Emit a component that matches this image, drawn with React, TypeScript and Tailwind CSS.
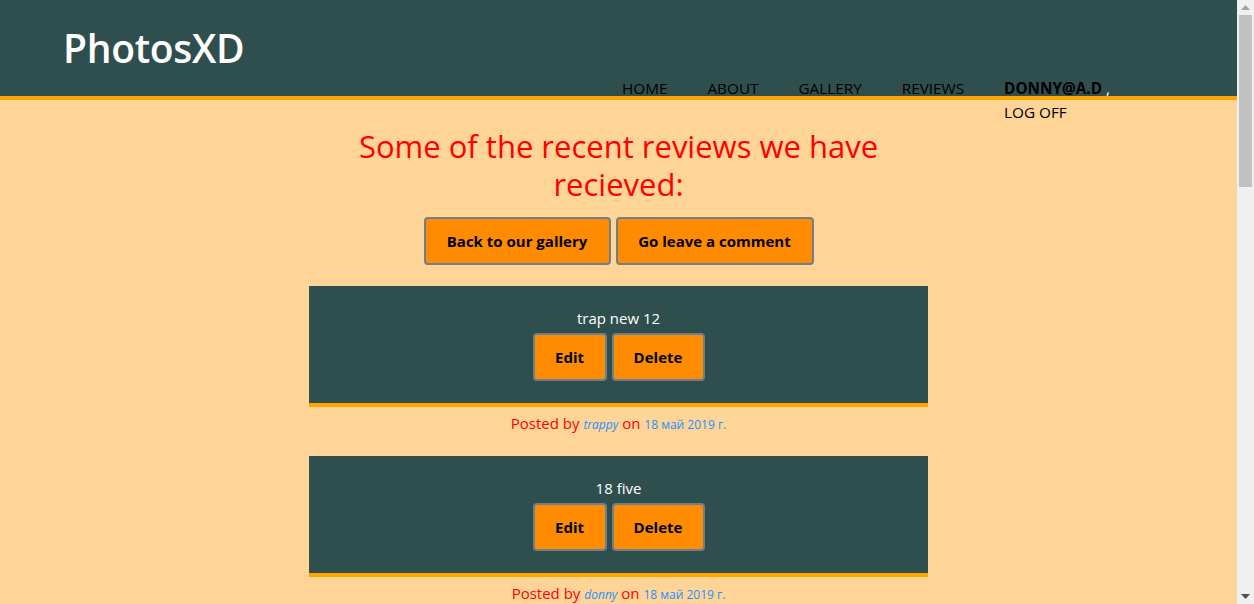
import React from 'react';

const reviews = [
  { id: 1, text: 'trap new 12', author: 'trappy', date: '18 май 2019 г.' },
  { id: 2, text: '18 five', author: 'donny', date: '18 май 2019 г.' },
  { id: 3, text: 'first!', author: 'trappy', date: '17 май 2019 г.' },
];

const navLinks = ['HOME', 'ABOUT', 'GALLERY', 'REVIEWS'];

function OrangeButton({ children, className = '' }: { children: React.ReactNode; className?: string }) {
  return (
    <button
      className={`bg-[#ff8c00] border-2 border-[#6f7f8f] rounded-[4px] font-bold text-black text-[15px] leading-[20px] py-3 ${className}`}
    >
      {children}
    </button>
  );
}

// fake window scrollbar, the screenshot was taken with one showing
function Scrollbar() {
  return (
    <div className="w-[17px] shrink-0 bg-[#f0f0f0] flex flex-col items-center">
      <svg width="9" height="5" viewBox="0 0 9 5" className="mt-[5px] shrink-0">
        <path d="M4.5 0 L9 5 L0 5 Z" fill="#a3a3a3" />
      </svg>
      <div className="w-[13px] h-[172px] bg-[#c1c1c1] mt-[5px] shrink-0" />
      <div className="flex-1" />
      <svg width="9" height="5" viewBox="0 0 9 5" className="mb-[5px] shrink-0">
        <path d="M0 0 L9 0 L4.5 5 Z" fill="#505050" />
      </svg>
    </div>
  );
}

export default function App() {
  return (
    <div className="flex h-screen overflow-hidden font-['Open_Sans',sans-serif]">
      <div className="flex-1 min-w-0 bg-[#ffd597] overflow-hidden">
        <header className="h-[100px] bg-[#2f4f4f] border-b-4 border-[#ffa500] relative">
          <h1 className="absolute left-[63px] top-[19px] text-[39px] font-semibold text-white tracking-[-0.3px]">
            PhotosXD
          </h1>
          <ul className="absolute left-[622px] top-[76px] flex gap-[40px] text-[15.3px] leading-[24px] text-black">
            {navLinks.map(l => (
              <li key={l}>
                <a href="#">{l}</a>
              </li>
            ))}
            <li className="w-[125px] text-white">
              <a href="#" className="font-bold text-black">DONNY@A.D</a> ,{' '}
              <a href="#" className="text-black">LOG OFF</a>
            </li>
          </ul>
        </header>

        <main className="w-1/2 mx-auto pt-[27px] pb-10 text-center">
          <h2 className="text-[red] text-[31px] leading-[38px] px-[40px]">
            Some of the recent reviews we have recieved:
          </h2>
          <div className="flex justify-center gap-[5px] mt-[14px]">
            <OrangeButton className="w-[187px]">Back to our gallery</OrangeButton>
            <OrangeButton className="w-[198px]">Go leave a comment</OrangeButton>
          </div>

          <div className="mt-[21px] flex flex-col gap-[23px]">
            {reviews.map(r => (
              <div key={r.id}>
                <div className="bg-[#2f4f4f] border-b-4 border-[#ffa500] pt-[22px] pb-[22px]">
                  <p className="text-white text-[15px] leading-[20px]">{r.text}</p>
                  <div className="flex justify-center gap-[5px] mt-[5px]">
                    <OrangeButton className="w-[74px]">Edit</OrangeButton>
                    <OrangeButton className="w-[93px]">Delete</OrangeButton>
                  </div>
                </div>
                <p className="mt-[6px] h-[20px] text-[15px] leading-[20px] text-[red]">
                  Posted by{' '}
                  <a href="#" className="italic text-[12px] leading-[20px] text-[#1e90ff]">{r.author}</a> on{' '}
                  <span className="text-[12px] leading-[20px] text-[#1e90ff]">{r.date}</span>
                </p>
              </div>
            ))}
          </div>
        </main>
      </div>
      <Scrollbar />
    </div>
  );
}
